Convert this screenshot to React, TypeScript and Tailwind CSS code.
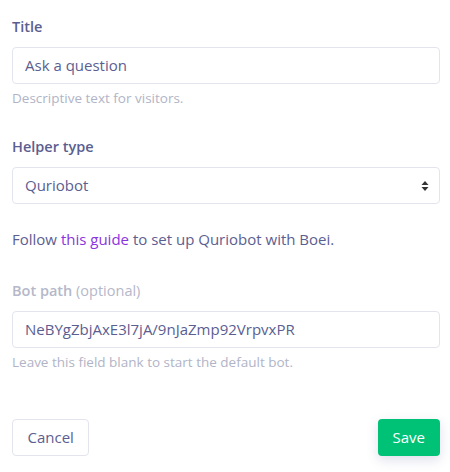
import React from "react";

export default function App() {
  return (
    <div
      className="w-[450px] h-[472px] bg-white pl-3 pr-[10px] pt-[17px] text-[#5b5e91]"
      style={{ fontFamily: '"Open Sans", "Noto Sans", sans-serif' }}
    >
      <div className="flex flex-col">
        <label className="text-[14.5px] font-semibold leading-[20px] text-[#5b5e91]">Title</label>
        <div className="mt-[10px] h-[37px] border border-[#e3e5ee] rounded-[4px] flex items-center px-3 text-[15px]">
          Ask a question
        </div>
        <div className="mt-[5px] text-[13.5px] leading-[18px] text-[#b1b4c6]">Descriptive text for visitors.</div>
      </div>

      <div className="flex flex-col mt-[30px]">
        <label className="text-[14.5px] font-semibold leading-[20px] text-[#5b5e91]">Helper type</label>
        <div className="mt-[10px] h-[37px] border border-[#e3e5ee] rounded-[4px] flex items-center justify-between pl-3 pr-[10px] text-[15px]">
          <span>Quriobot</span>
          <svg width="8" height="12" viewBox="0 0 8 12">
            <path d="M4 1 L7.5 5 L0.5 5 Z" fill="#333" />
            <path d="M4 11 L7.5 7 L0.5 7 Z" fill="#333" />
          </svg>
        </div>
      </div>

      <div className="mt-[24px] text-[15px] leading-[22px]">
        Follow <span className="text-[#8a34e0]">this guide</span> to set up Quriobot with Boei.
      </div>

      <div className="flex flex-col mt-[31px]">
        <label className="text-[14.5px] leading-[20px] text-[#b5b8c9]">
          <span className="font-semibold">Bot path</span> (optional)
        </label>
        <div className="mt-[10px] h-[37px] border border-[#e3e5ee] rounded-[4px] flex items-center px-3 text-[15px]">
          NeBYgZbjAxE3l7jA/9nJaZmp92VrpvxPR
        </div>
        <div className="mt-[5px] text-[13.5px] leading-[18px] text-[#b1b4c6]">Leave this field blank to start the default bot.</div>
      </div>

      <div className="flex justify-between mt-[48px]">
        <button className="h-[37px] px-[14.5px] border border-[#e3e5ee] rounded-[4px] text-[15px] text-[#5b5e91] bg-white">
          Cancel
        </button>
        <button className="h-[37px] px-[15px] rounded-[4px] text-[15px] font-medium text-white bg-[#00c277] shadow-[0_4px_12px_rgba(90,94,160,0.2)]">
          Save
        </button>
      </div>
    </div>
  );
}
